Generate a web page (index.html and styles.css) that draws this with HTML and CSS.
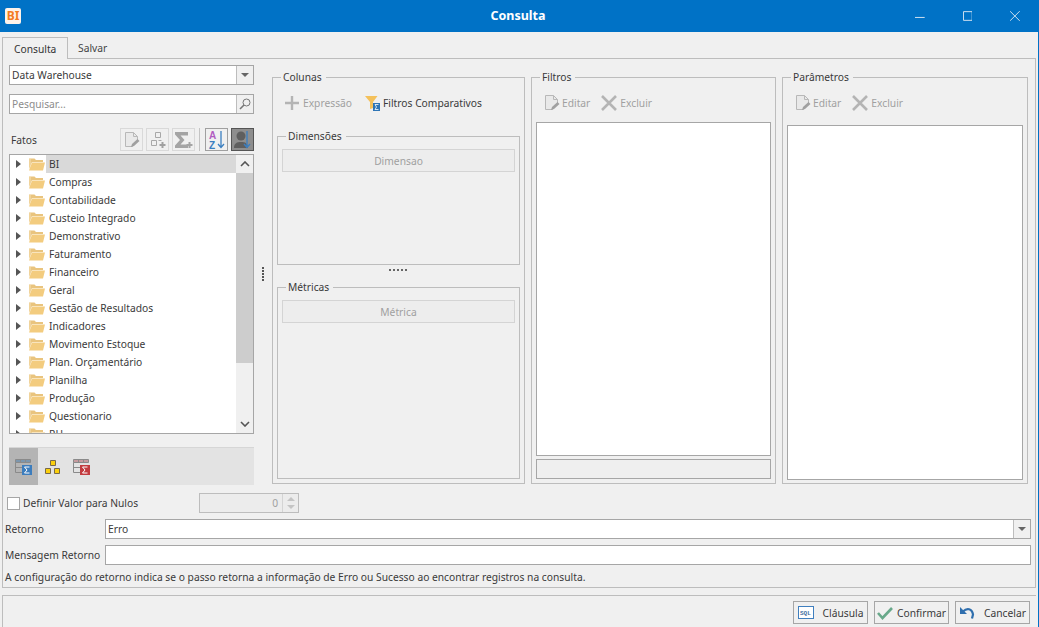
FILE: index.html
```html
<!DOCTYPE html>
<html lang="pt">
<head>
<meta charset="utf-8">
<title>Consulta</title>
<link rel="stylesheet" href="styles.css">
</head>
<body>
<svg class="defs" width="0" height="0" aria-hidden="true">
  <symbol id="folder" viewBox="0 0 16 14">
    <path d="M0 1.500h5.500l1.500 1.500h7v2H3L0 12z" fill="#e9c47e"/>
    <path d="M1 1v10" stroke="#f6e2b8" fill="none"/>
    <path d="M3 5.500h13L14 13.500H0z" fill="#f3cc7f"/>
  </symbol>
  <symbol id="edit" viewBox="0 0 16 18">
    <path d="M1.500 1.500h8l4 4v4l-5 6h-7z" fill="#e9e9e9" stroke="#b8b8b8"/>
    <path d="M9.500 1.500v4h4" fill="none" stroke="#b8b8b8"/>
    <path d="M7 16l1-3 5.500-5 2 2-5.500 5z" fill="#a0a0a0"/>
  </symbol>
  <symbol id="cross" viewBox="0 0 16 16">
    <path d="M1 1l14 14M15 1L1 15" stroke="#b4b4b4" stroke-width="2.600" fill="none"/>
  </symbol>
</svg>
<div class="window">
  <header class="titlebar">
    <span class="app-icon">BI</span>
    <h1 class="title">Consulta</h1>
    <div class="win-buttons">
      <svg class="win-btn" width="10" height="10" viewBox="0 0 10 10"><path d="M0 6.500h10" stroke="#d5e3f0" fill="none"/></svg>
      <svg class="win-btn" width="10" height="10" viewBox="0 0 10 10"><path d="M.5.500h9v9h-9z" stroke="#d5e3f0" fill="none"/></svg>
      <svg class="win-btn" width="10" height="10" viewBox="0 0 10 10"><path d="M0 0l10 10M10 0L0 10" stroke="#d5e3f0" fill="none"/></svg>
    </div>
  </header>

  <nav class="tabs">
    <span class="tab tab-active">Consulta</span>
    <span class="tab">Salvar</span>
  </nav>

  <section class="pane">
    <div class="main-row">
      <div class="left-col">
        <div class="field combo">
          <span class="field-text">Data Warehouse</span>
          <span class="combo-btn"><i class="caret"></i></span>
        </div>
        <div class="field search">
          <span class="field-text placeholder">Pesquisar...</span>
          <span class="combo-btn">
            <svg width="14" height="14" viewBox="0 0 14 14"><circle cx="8.500" cy="5.500" r="3.500" fill="none" stroke="#777"/><path d="M6 8l-4 4" stroke="#777" stroke-width="1.600"/></svg>
          </span>
        </div>
        <div class="fatos-row">
          <span class="fatos-label">Fatos</span>
          <span class="tool tool-off"><svg width="16" height="18"><use href="#edit"/></svg></span>
          <span class="tool tool-off">
            <svg width="18" height="18" viewBox="0 0 18 18"><path d="M6.500 1.500h5v5h-5zM2.500 9.500h5v5h-5z" fill="none" stroke="#a8a8a8"/><path d="M9.500 9.500h3" stroke="#a8a8a8" fill="none"/><path d="M13.500 11v6M10.500 14h6" stroke="#a0a0a0" stroke-width="2" fill="none"/></svg>
          </span>
          <span class="tool tool-off">
            <svg width="20" height="18" viewBox="0 0 20 18"><path d="M1 1h13v3.500H6.500l4 4.500-4 4.500H14V17H1v-2.500L6 9 1 3.500z" fill="#a4a4a4"/><path d="M12.500 14h6M15.500 11v6" stroke="#a4a4a4" stroke-width="2"/></svg>
          </span>
          <span class="tool-sep"></span>
          <span class="tool tool-on">
            <svg width="18" height="20" viewBox="0 0 18 20"><text x="1" y="9" class="az-a">A</text><text x="1" y="19" class="az-z">Z</text><path d="M13 1v16M10 14l3 3.500 3-3.500" fill="none" stroke="#3b7fc0" stroke-width="1.300"/></svg>
          </span>
          <span class="tool tool-dark">
            <svg width="20" height="20" viewBox="0 0 20 20"><circle cx="8" cy="6" r="4.500" fill="#5f5f5f"/><path d="M1 18c0-5 3-6 7-6s7 1 7 6z" fill="#5f5f5f"/><path d="M14 1v16M11 14l3 3.500 3-3.500" fill="none" stroke="#3b7fc0" stroke-width="1.300"/></svg>
          </span>
        </div>

        <div class="tree">
          <ul class="tree-list">
            <li class="tree-row selected"><i class="arrow"></i><svg class="folder" width="16" height="14"><use href="#folder"/></svg><span class="tree-text">BI</span></li>
            <li class="tree-row"><i class="arrow"></i><svg class="folder" width="16" height="14"><use href="#folder"/></svg><span class="tree-text">Compras</span></li>
            <li class="tree-row"><i class="arrow"></i><svg class="folder" width="16" height="14"><use href="#folder"/></svg><span class="tree-text">Contabilidade</span></li>
            <li class="tree-row"><i class="arrow"></i><svg class="folder" width="16" height="14"><use href="#folder"/></svg><span class="tree-text">Custeio Integrado</span></li>
            <li class="tree-row"><i class="arrow"></i><svg class="folder" width="16" height="14"><use href="#folder"/></svg><span class="tree-text">Demonstrativo</span></li>
            <li class="tree-row"><i class="arrow"></i><svg class="folder" width="16" height="14"><use href="#folder"/></svg><span class="tree-text">Faturamento</span></li>
            <li class="tree-row"><i class="arrow"></i><svg class="folder" width="16" height="14"><use href="#folder"/></svg><span class="tree-text">Financeiro</span></li>
            <li class="tree-row"><i class="arrow"></i><svg class="folder" width="16" height="14"><use href="#folder"/></svg><span class="tree-text">Geral</span></li>
            <li class="tree-row"><i class="arrow"></i><svg class="folder" width="16" height="14"><use href="#folder"/></svg><span class="tree-text">Gestão de Resultados</span></li>
            <li class="tree-row"><i class="arrow"></i><svg class="folder" width="16" height="14"><use href="#folder"/></svg><span class="tree-text">Indicadores</span></li>
            <li class="tree-row"><i class="arrow"></i><svg class="folder" width="16" height="14"><use href="#folder"/></svg><span class="tree-text">Movimento Estoque</span></li>
            <li class="tree-row"><i class="arrow"></i><svg class="folder" width="16" height="14"><use href="#folder"/></svg><span class="tree-text">Plan. Orçamentário</span></li>
            <li class="tree-row"><i class="arrow"></i><svg class="folder" width="16" height="14"><use href="#folder"/></svg><span class="tree-text">Planilha</span></li>
            <li class="tree-row"><i class="arrow"></i><svg class="folder" width="16" height="14"><use href="#folder"/></svg><span class="tree-text">Produção</span></li>
            <li class="tree-row"><i class="arrow"></i><svg class="folder" width="16" height="14"><use href="#folder"/></svg><span class="tree-text">Questionario</span></li>
            <li class="tree-row"><i class="arrow"></i><svg class="folder" width="16" height="14"><use href="#folder"/></svg><span class="tree-text">RH</span></li>
          </ul>
          <div class="scrollbar">
            <span class="sb-btn"><svg width="10" height="6" viewBox="0 0 10 6"><path d="M1 5l4-4 4 4" fill="none" stroke="#555" stroke-width="1.600"/></svg></span>
            <span class="sb-thumb"></span>
            <span class="sb-track"></span>
            <span class="sb-btn"><svg width="10" height="6" viewBox="0 0 10 6"><path d="M1 1l4 4 4-4" fill="none" stroke="#555" stroke-width="1.600"/></svg></span>
          </div>
        </div>

        <div class="mode-bar">
          <span class="mode mode-on">
            <svg width="18" height="16" viewBox="0 0 18 16"><path d="M.5.500h15v3H.5z" fill="#7c96ad" stroke="#8a8a8a"/><path d="M.500 3.500v10h7M.5 8.500h7M5.500.500v3M10.500.500v3" fill="none" stroke="#8a8a8a"/><rect x="7" y="6" width="10" height="10" fill="#3d7dbd"/><path d="M14.500 8h-5l2.500 3-2.500 3h5" fill="none" stroke="#fff"/></svg>
          </span>
          <span class="mode">
            <svg width="16" height="14" viewBox="0 0 16 14"><path d="M5.500.500h5v5h-5zM.500 8.500h5v5h-5zM9.500 8.500h5v5h-5z" fill="#fbcf0b" stroke="#77694b"/></svg>
          </span>
          <span class="mode">
            <svg width="18" height="16" viewBox="0 0 18 16"><path d="M.5.500h15v3H.5z" fill="#c69a9e" stroke="#8a8a8a"/><path d="M.500 3.500v10h7M.5 8.500h7M5.500.500v3M10.500.500v3" fill="none" stroke="#8a8a8a"/><rect x="7" y="6" width="10" height="10" fill="#c23b3f"/><path d="M14.500 8h-5l2.500 3-2.500 3h5" fill="none" stroke="#fff"/></svg>
          </span>
        </div>
      </div>

      <div class="v-split"><i class="dots-v"></i></div>

      <fieldset class="group group-cols">
        <legend class="legend">Colunas</legend>
        <div class="toolbar toolbar-wide">
          <span class="tb-item off">
            <svg width="16" height="16" viewBox="0 0 16 16"><path d="M7 1v14M0 8h14" stroke="#b4b4b4" stroke-width="2.400" fill="none"/></svg>
            Expressão
          </span>
          <span class="tb-item">
            <svg width="16" height="16" viewBox="0 0 16 16"><path d="M0 1h12.500L8 7v6l-3 1V7z" fill="#f4c15b"/><rect x="8" y="8" width="7" height="8" fill="#2e75b6"/><path d="M13.500 9.500H10l1.500 2.500-1.500 2.500h3.500" fill="none" stroke="#fff" stroke-width=".8"/></svg>
            Filtros Comparativos
          </span>
        </div>
        <fieldset class="group group-dim">
          <legend class="legend">Dimensões</legend>
          <div class="drop-head">Dimensao</div>
        </fieldset>
        <div class="h-split"><i class="dots-h"></i></div>
        <fieldset class="group group-met">
          <legend class="legend">Métricas</legend>
          <div class="drop-head">Métrica</div>
        </fieldset>
      </fieldset>

      <fieldset class="group group-filters">
        <legend class="legend">Filtros</legend>
        <div class="toolbar">
          <span class="tb-item off"><svg width="16" height="18"><use href="#edit"/></svg>Editar</span>
          <span class="tb-item off tb-cross"><svg width="16" height="16"><use href="#cross"/></svg>Excluir</span>
        </div>
        <div class="listbox filter-list"></div>
        <div class="filter-foot"></div>
      </fieldset>

      <fieldset class="group group-params">
        <legend class="legend">Parâmetros</legend>
        <div class="toolbar">
          <span class="tb-item off"><svg width="16" height="18"><use href="#edit"/></svg>Editar</span>
          <span class="tb-item off tb-cross"><svg width="16" height="16"><use href="#cross"/></svg>Excluir</span>
        </div>
        <div class="listbox param-list"></div>
      </fieldset>
    </div>

    <div class="null-row">
      <span class="check"></span>
      <span class="check-label">Definir Valor para Nulos</span>
      <div class="spin">
        <span class="spin-val">0</span>
        <span class="spin-btns">
          <svg width="16" height="9" viewBox="0 0 16 9"><path d="M4 7l4-4 4 4z" fill="#c4c4c4"/></svg>
          <svg width="16" height="9" viewBox="0 0 16 9"><path d="M4 2l4 4 4-4z" fill="#c4c4c4"/></svg>
        </span>
      </div>
    </div>
    <div class="form-row">
      <label class="form-label">Retorno</label>
      <div class="field form-field">
        <span class="field-text">Erro</span>
        <span class="combo-btn"><i class="caret"></i></span>
      </div>
    </div>
    <div class="form-row">
      <label class="form-label">Mensagem Retorno</label>
      <div class="field form-field"></div>
    </div>
    <p class="hint">A configuração do retorno indica se o passo retorna a informação de Erro ou Sucesso ao encontrar registros na consulta.</p>
  </section>

  <footer class="footer">
    <button class="btn btn-wide">
      <svg width="16" height="13" viewBox="0 0 16 13"><rect x=".5" y=".5" width="15" height="12" fill="#fff" stroke="#3f7fbf"/><text x="2" y="9" class="sql">SQL</text></svg>
      Cláusula
    </button>
    <button class="btn">
      <svg width="16" height="14" viewBox="0 0 16 14"><path d="M1 7l4.500 5L15 2" fill="none" stroke="#68a88a" stroke-width="2.600"/></svg>
      Confirmar
    </button>
    <button class="btn btn-wide">
      <svg width="16" height="14" viewBox="0 0 16 14"><path d="M4 5.500c4-4 9-3 10 3l-1 4" fill="none" stroke="#2f6fae" stroke-width="2.200"/><path d="M1 1v7h7z" fill="#2f6fae"/></svg>
      Cancelar
    </button>
  </footer>
</div>
</body>
</html>
```
FILE: styles.css
```css
* { box-sizing: border-box; }
html, body { margin: 0; padding: 0; height: 100%; overflow: hidden; }
body {
  background: #f0f0f0;
  color: #3a3a3a;
  font-family: "Noto Sans", "Liberation Sans", Arial, sans-serif;
  font-size: 10.25px;
  line-height: 14px;
}
.defs { display: block; height: 0; }
.window {
  width: 1039px;
  height: 627px;
  display: flex;
  flex-direction: column;
  border-right: 1px solid #0072c6;
}

/* title bar */
.titlebar {
  height: 32px;
  flex: none;
  background: #0072c6;
  display: flex;
  align-items: center;
  padding-left: 5px;
  margin-right: -1px;
}
.app-icon {
  width: 16px;
  height: 16px;
  background: #fdf3ea;
  border-radius: 2px;
  color: #f47b20;
  font-weight: 700;
  font-size: 12px;
  line-height: 16px;
  text-align: center;
}
.title {
  flex: 1;
  margin: 0;
  color: #fff;
  font-size: 12.5px;
  font-weight: 700;
  text-align: center;
  padding-left: 100px;
}
.win-buttons { display: flex; gap: 38px; padding-right: 19px; width: 124px; justify-content: flex-end; }
.win-btn { display: block; }

/* tabs */
.tabs {
  flex: none;
  display: flex;
  margin: 5px 0 0 2px;
  height: 21px;
}
.tab { padding: 4px 10px 0; height: 21px; color: #444; }
.tab-active {
  width: 66px;
  padding: 4px 0 0 11px;
  color: #333;
  border: 1px solid #bdbdbd;
  border-bottom: 0;
  position: relative;
  z-index: 1;
  background: #f0f0f0;
  height: 22px;
}
.pane {
  flex: none;
  height: 530px;
  width: 1034px;
  margin-left: 2px;
  border: 1px solid #bdbdbd;
  display: flex;
  flex-direction: column;
}

/* main */
.main-row { display: flex; height: 434px; flex: none; }
.left-col { width: 245px; margin-left: 6px; padding-top: 6px; flex: none; }
.v-split { width: 18px; flex: none; display: flex; justify-content: center; align-items: flex-start; padding-top: 208px; }
.dots-v { width: 2px; height: 14px; background: repeating-linear-gradient(#555 0 2px, transparent 2px 3px); display: block; }

.field {
  display: flex;
  align-items: stretch;
  height: 20px;
  background: #fff;
  border: 1px solid #a6a6a6;
}
.field-text { flex: 1; padding: 2px 0 0 2px; color: #3a3a3a; }
.placeholder { color: #8c8c8c; }
.combo-btn {
  width: 17px;
  flex: none;
  border-left: 1px solid #bdbdbd;
  background: #f0f0f0;
  display: flex;
  align-items: center;
  justify-content: center;
}
.caret { width: 0; height: 0; border: 4px solid transparent; border-top: 4px solid #666; border-bottom: 0; display: block; }
.search { margin-top: 9px; }

.fatos-row { display: flex; align-items: center; height: 23px; margin-top: 14px; padding-left: 2px; gap: 3px; }
.fatos-label { flex: 1; color: #3a3a3a; }
.tool {
  width: 23px;
  height: 23px;
  display: flex;
  align-items: center;
  justify-content: center;
  border: 1px solid #d9d9d9;
}
.tool-sep { width: 1px; height: 23px; background: #c4c4c4; margin: 0 2px 0 1px; }
.tool-on { border-color: #a0a0a0; }
.tool-dark { background: #8e8e8e; border-color: #555; }
.az-a, .az-z { font-family: "Liberation Sans", sans-serif; font-size: 10px; font-weight: 700; }
.az-a { fill: #b05cc0; }
.az-z { fill: #3b7fc0; }

.tree {
  margin-top: 3px;
  height: 280px;
  background: #fff;
  border: 1px solid #a6a6a6;
  display: flex;
  overflow: hidden;
}
.tree-list { flex: 1; margin: 0; padding: 0; list-style: none; overflow: hidden; }
.tree-row { height: 18px; display: flex; align-items: center; padding-left: 6px; }
.arrow { width: 0; height: 0; border: 4px solid transparent; border-left: 5px solid #555; border-right: 0; display: block; margin-right: 5px; }
.folder { display: block; margin-right: 1px; flex: none; margin-left: 3px; }
.tree-text { flex: 1; padding-left: 3px; line-height: 18px; color: #3a3a3a; }
.selected .tree-text { background: #d9d9d9; }
.scrollbar { width: 17px; flex: none; display: flex; flex-direction: column; background: #f0f0f0; }
.sb-btn { height: 18px; flex: none; display: flex; align-items: center; justify-content: center; }
.sb-thumb { height: 190px; background: #cdcdcd; flex: none; }
.sb-track { flex: 1; }

.mode-bar { margin-top: 13px; height: 38px; background: #e3e3e3; border-top: 1px solid #d6d6d6; display: flex; }
.mode { width: 29px; display: flex; align-items: center; justify-content: center; }
.mode-on { background: #b4b4b4; }

/* groups */
.group { margin: 0; padding: 0 4px; border: 1px solid #bdbdbd; min-width: 0; }
.legend { padding: 0 4px 0 2px; margin-left: 4px; line-height: 14px; color: #3a3a3a; }
.group-cols { width: 253px; height: 414px; margin-top: 11px; flex: none; }
.group-filters { width: 245px; height: 414px; margin: 11px 0 0 6px; flex: none; }
.group-params { width: 246px; height: 414px; margin: 11px 0 0 6px; flex: none; }
.toolbar { display: flex; gap: 11px; height: 22px; margin-top: 8px; padding-left: 8px; }
.toolbar-wide { gap: 13px; }
.tb-item { display: flex; align-items: center; gap: 2px; color: #3a3a3a; white-space: nowrap; }
.tb-item.off { color: #a0a0a0; }
.tb-cross { gap: 3px; }
.group-dim { height: 136px; margin-top: 15px; }
.group-met { height: 199px; }
.h-split { height: 15px; display: flex; justify-content: center; padding-top: 4px; }
.dots-h { width: 19px; height: 2px; background: repeating-linear-gradient(90deg, #666 0 2px, transparent 2px 4px); display: block; }
.drop-head {
  height: 23px;
  margin-top: 6px;
  border: 1px solid #d4d4d4;
  background: #ededed;
  color: #a0a0a0;
  text-align: center;
  line-height: 23px;
}
.listbox { background: #fff; border: 1px solid #a6a6a6; }
.filter-list { height: 334px; margin-top: 8px; }
.filter-foot { height: 20px; margin-top: 3px; border: 1px solid #a6a6a6; background: #efefef; }
.param-list { height: 355px; margin-top: 11px; }

/* form */
.null-row { display: flex; align-items: center; height: 20px; flex: none; padding-left: 4px; }
.check { width: 13px; height: 13px; border: 1px solid #a6a6a6; background: #fff; flex: none; }
.check-label { width: 179px; padding-left: 3px; flex: none; white-space: nowrap; }
.spin { width: 100px; height: 20px; border: 1px solid #bdbdbd; background: #ececec; display: flex; }
.spin-val { flex: 1; text-align: right; padding: 2px 4px 0 0; color: #a0a0a0; }
.spin-btns { width: 16px; border-left: 1px solid #d4d4d4; display: flex; flex-direction: column; }
.spin-btns svg { display: block; }

.form-row { display: flex; align-items: center; height: 20px; margin-top: 6px; flex: none; padding-left: 2px; }
.form-label { width: 100px; flex: none; white-space: nowrap; }
.form-field { width: 926px; flex: none; }
.hint { margin: 5px 0 0; padding-left: 2px; line-height: 14px; white-space: nowrap; }

/* footer */
.footer {
  flex: none;
  margin: 7px 0 0 2px;
  border-top: 1px solid #bdbdbd;
  border-left: 1px solid #bdbdbd;
  height: 33px;
  width: 1034px;
  display: flex;
  justify-content: flex-end;
  padding: 5px 6px 0 0;
  gap: 6px;
}
.btn {
  height: 23px;
  width: 75px;
  border: 1px solid #a6a6a6;
  background: #f0f0f0;
  font: inherit;
  color: #3a3a3a;
  display: flex;
  align-items: center;
  justify-content: center;
  gap: 4px;
  padding: 0;
}
.btn-wide { gap: 9px; }
.sql { font-family: "Liberation Mono", monospace; font-size: 6px; font-weight: 700; fill: #3f6f9f; }
```
